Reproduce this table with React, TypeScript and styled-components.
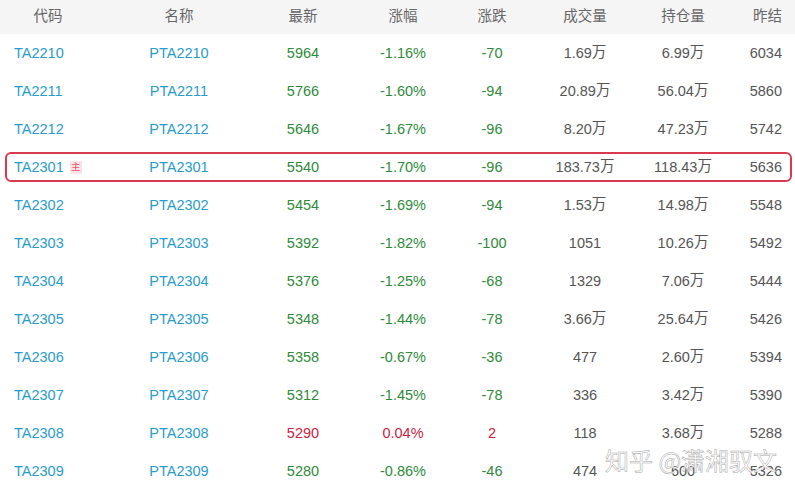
import React from "react";
import styled, { createGlobalStyle } from "styled-components";

const GlobalStyle = createGlobalStyle`
  body {
    margin: 0;
    background: #ffffff;
    font-family: "Liberation Sans", "Noto Sans CJK SC", sans-serif;
  }
`;

const cols = "96px 166px 82px 118px 60px 126px 70px 1fr";

const Page = styled.div`
  position: relative;
  width: 795px;
  height: 491px;
  overflow: hidden;
  background: #fff;
`;

const HeaderRow = styled.div`
  display: grid;
  grid-template-columns: ${cols};
  height: 34px;
  align-items: center;
  background: #f5f5f6;
  color: #666;
  font-size: 14.5px;
  line-height: 1;
  padding-bottom: 2px;
  box-sizing: border-box;
`;

const HeadCell = styled.div<{ $align?: string }>`
  text-align: ${(p) => p.$align || "center"};
  padding: ${(p) => (p.$align === "right" ? "0 13px 0 0" : "0")};
`;

const Row = styled.div<{ $marked?: boolean }>`
  position: relative;
  display: grid;
  grid-template-columns: ${cols};
  height: 38px;
  align-items: center;
  font-size: 14.5px;
  line-height: 1;
  color: #555;

  &::after {
    content: "";
    display: ${(p) => (p.$marked ? "block" : "none")};
    position: absolute;
    left: 5px;
    right: 3px;
    top: 4px;
    bottom: 4px;
    border: 2px solid #d93a4f;
    border-radius: 6px;
    pointer-events: none;
  }
`;

const Cell = styled.div<{ $tone?: "blue" | "green" | "red"; $align?: string }>`
  display: flex;
  align-items: baseline;
  justify-content: ${(p) =>
    p.$align === "left" ? "flex-start" : p.$align === "right" ? "flex-end" : "center"};
  padding: ${(p) =>
    p.$align === "left" ? "0 0 0 14px" : p.$align === "right" ? "0 13px 0 0" : "0"};
  color: ${(p) =>
    p.$tone === "blue" ? "#2a9ccb" : p.$tone === "green" ? "#2f8a3b" : p.$tone === "red" ? "#c8243f" : "#555"};
`;

const Unit = styled.span`
  position: relative;
  top: -1px;
`;

const Badge = styled.span`
  display: inline-flex;
  align-items: center;
  justify-content: center;
  align-self: center;
  margin-left: 6px;
  width: 12px;
  height: 13px;
  background: #fbe3e7;
  color: #e0566b;
  font-size: 9.5px;
  border-radius: 1px;
`;

const Watermark = styled.div`
  position: absolute;
  left: 605px;
  top: 442px;
  font-size: 24px;
  color: rgba(255, 255, 255, 0.85);
  -webkit-text-stroke: 0.5px #a8a8a8;
  white-space: nowrap;
  font-family: "Noto Sans CJK SC", sans-serif;
  pointer-events: none;
`;

type Item = [string, string, string, string, string, string, string];

const rows: Item[] = [
  ["TA2210", "5964", "-1.16%", "-70", "1.69万", "6.99万", "6034"],
  ["TA2211", "5766", "-1.60%", "-94", "20.89万", "56.04万", "5860"],
  ["TA2212", "5646", "-1.67%", "-96", "8.20万", "47.23万", "5742"],
  ["TA2301", "5540", "-1.70%", "-96", "183.73万", "118.43万", "5636"],
  ["TA2302", "5454", "-1.69%", "-94", "1.53万", "14.98万", "5548"],
  ["TA2303", "5392", "-1.82%", "-100", "1051", "10.26万", "5492"],
  ["TA2304", "5376", "-1.25%", "-68", "1329", "7.06万", "5444"],
  ["TA2305", "5348", "-1.44%", "-78", "3.66万", "25.64万", "5426"],
  ["TA2306", "5358", "-0.67%", "-36", "477", "2.60万", "5394"],
  ["TA2307", "5312", "-1.45%", "-78", "336", "3.42万", "5390"],
  ["TA2308", "5290", "0.04%", "2", "118", "3.68万", "5288"],
  ["TA2309", "5280", "-0.86%", "-46", "474", "600", "5326"],
];

const Amount: React.FC<{ value: string }> = ({ value }) =>
  value.endsWith("万") ? (
    <>
      {value.slice(0, -1)}
      <Unit>万</Unit>
    </>
  ) : (
    <>{value}</>
  );

const App: React.FC = () => (
  <Page>
    <GlobalStyle />
    <HeaderRow>
      <HeadCell>代码</HeadCell>
      <HeadCell>名称</HeadCell>
      <HeadCell>最新</HeadCell>
      <HeadCell>涨幅</HeadCell>
      <HeadCell>涨跌</HeadCell>
      <HeadCell>成交量</HeadCell>
      <HeadCell>持仓量</HeadCell>
      <HeadCell $align="right">昨结</HeadCell>
    </HeaderRow>
    {rows.map(([code, last, pct, chg, vol, oi, prev]) => {
      const tone = pct.startsWith("-") ? "green" : "red";
      const main = code === "TA2301";
      return (
        <Row key={code} $marked={main}>
          <Cell $tone="blue" $align="left">
            {code}
            {main && <Badge>主</Badge>}
          </Cell>
          <Cell $tone="blue">P{code}</Cell>
          <Cell $tone={tone}>{last}</Cell>
          <Cell $tone={tone}>{pct}</Cell>
          <Cell $tone={tone}>{chg}</Cell>
          <Cell>
            <Amount value={vol} />
          </Cell>
          <Cell>
            <Amount value={oi} />
          </Cell>
          <Cell $align="right">{prev}</Cell>
        </Row>
      );
    })}
    <Watermark>知乎 @潇湘驭文</Watermark>
  </Page>
);

export default App;
